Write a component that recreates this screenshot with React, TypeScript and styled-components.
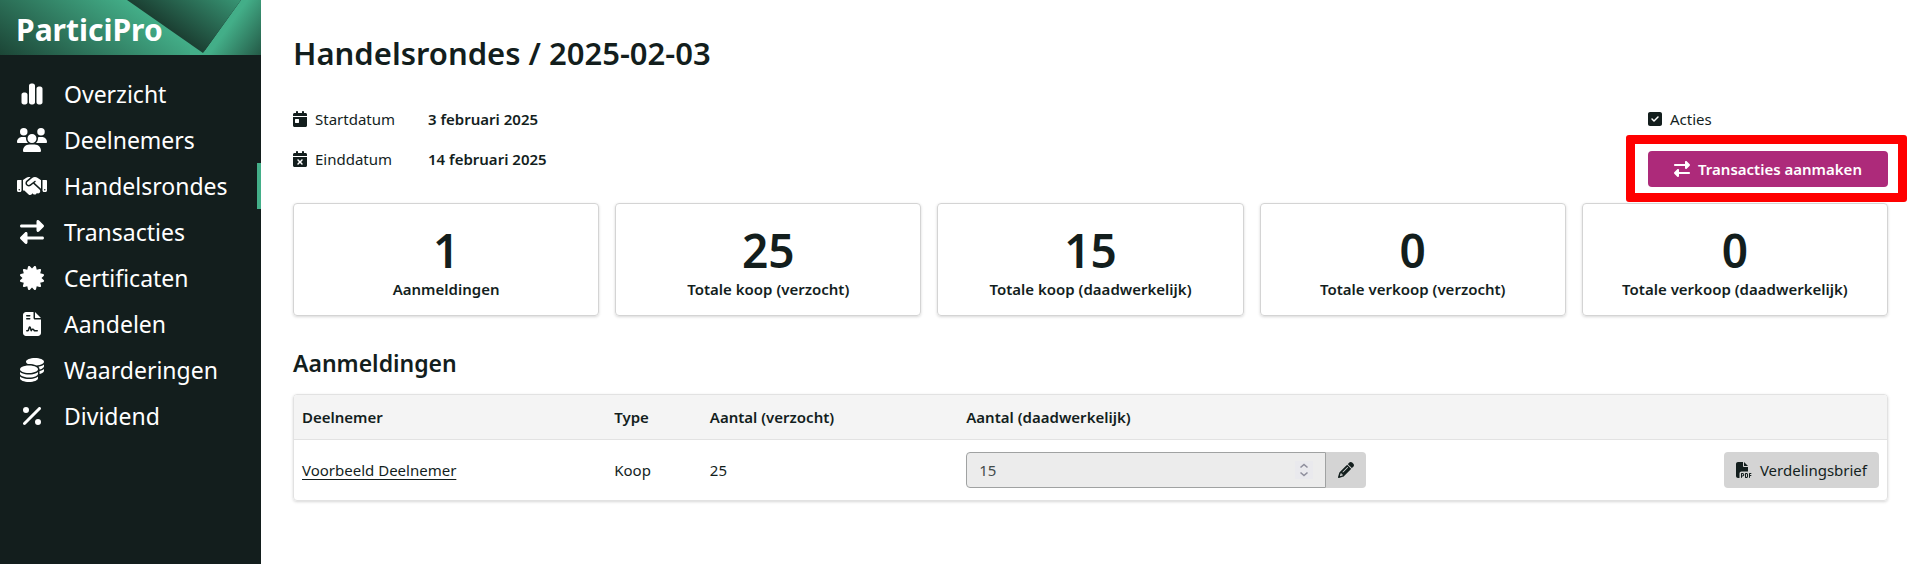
import React from "react";
import type { ReactNode } from "react";
import styled, { createGlobalStyle, css } from "styled-components";
import {
  FaCalendarDay,
  FaCalendarXmark,
  FaCertificate,
  FaChartSimple,
  FaCoins,
  FaFileContract,
  FaFilePdf,
  FaHandshake,
  FaPencil,
  FaPercent,
  FaRightLeft,
  FaSquareCheck,
  FaUsers,
} from "react-icons/fa6";

const ink = "#131e1d";
const green = "#43ae88";
const grey = "#d4d4d4";
const fontStack = '"Noto Sans", "Open Sans", sans-serif';

const GlobalStyle = createGlobalStyle`
  *, *::before, *::after { box-sizing: border-box; }
  body {
    margin: 0;
    background: #fff;
    color: ${ink};
    font: 400 15px/24px ${fontStack};
  }
  button, input { font: inherit; color: inherit; }
`;

const Shell = styled.div`
  display: flex;
  min-height: 100vh;
`;

const Sidebar = styled.aside`
  flex: 0 0 261px;
  background: ${ink};
  color: #fff;
`;

const Brand = styled.div`
  position: relative;
  height: 55px;
  padding: 0 16px;
  overflow: hidden;
  font-size: 30px;
  font-weight: 700;
  line-height: 59px;
`;

const BrandArt = styled.svg`
  position: absolute;
  inset: 0;
  width: 100%;
  height: 100%;
`;

const BrandName = styled.span`
  position: relative;
`;

const NavList = styled.ul`
  margin: 0;
  padding: 16px 0;
  list-style: none;
`;

const NavLink = styled.a<{ $active?: boolean }>`
  display: flex;
  align-items: center;
  gap: 16px;
  height: 46px;
  padding-left: 16px;
  color: #fff;
  font-size: 23px;
  text-decoration: none;
  ${(p) =>
    p.$active &&
    css`
      border-right: 4px solid ${green};
    `}
`;

const NavIcon = styled.span`
  display: flex;
  justify-content: center;
  width: 32px;

  svg {
    width: 30px;
    height: 24px;
  }
`;

const Main = styled.main`
  flex: 1;
  min-width: 0;
  padding: 32px 31px 32px 32px;
`;

const Title = styled.h1`
  margin: 0 0 33px;
  font-size: 31px;
  font-weight: 600;
  line-height: 42px;
`;

const Summary = styled.div`
  display: flex;
  justify-content: space-between;
  align-items: flex-start;
  margin-bottom: 16px;
`;

const Dates = styled.dl`
  display: grid;
  grid-template-columns: 135px auto;
  row-gap: 16px;
  margin: 0;
`;

const Term = styled.dt`
  display: flex;
  align-items: center;
  gap: 8px;

  svg {
    width: 14px;
    height: 16px;
  }
`;

const Value = styled.dd`
  margin: 0;
  font-weight: 600;
`;

const Actions = styled.div`
  width: 240px;
`;

const ActionsLabel = styled.div`
  display: flex;
  align-items: center;
  gap: 8px;
  margin-bottom: 20px;

  svg {
    width: 14px;
    height: 16px;
  }
`;

const Highlight = styled.div`
  position: relative;

  &::after {
    content: "";
    position: absolute;
    inset: -16px -19px -15px -22px;
    border: 9px solid #f00;
    border-radius: 3px;
    pointer-events: none;
  }
`;

const Button = styled.button<{ $primary?: boolean }>`
  display: inline-flex;
  align-items: center;
  justify-content: center;
  gap: 8px;
  height: 36px;
  padding: 0 12px;
  border: 0;
  border-radius: 4px;
  background: ${grey};
  cursor: pointer;

  svg {
    width: 16px;
    height: 16px;
  }

  ${(p) =>
    p.$primary &&
    css`
      width: 100%;
      background: #ad2a7a;
      color: #fff;
      font-weight: 600;
    `}
`;

const Stats = styled.div`
  display: grid;
  grid-template-columns: repeat(5, 1fr);
  gap: 16px;
`;

const StatCard = styled.div`
  padding: 20px 16px 14px;
  border: 1px solid ${grey};
  border-radius: 4px;
  box-shadow: 0 1px 3px rgba(0, 0, 0, 0.16);
  text-align: center;
  font-weight: 600;
`;

const StatValue = styled.div`
  font-size: 46px;
  line-height: 53px;
`;

const SectionTitle = styled.h2`
  margin: 31px 0 15px;
  font-size: 23px;
  font-weight: 600;
  line-height: 32px;
`;

const TableFrame = styled.div`
  border: 1px solid #e2e2e2;
  border-radius: 4px;
  box-shadow: 0 1px 3px rgba(0, 0, 0, 0.16);
  overflow: hidden;
`;

const Table = styled.table`
  width: 100%;
  border-collapse: separate;
  border-spacing: 0;
  table-layout: fixed;
`;

const HeadCell = styled.th<{ $width?: string }>`
  width: ${(p) => p.$width ?? "auto"};
  height: 45px;
  padding: 0 8px;
  border-bottom: 1px solid #e2e2e2;
  background: #f4f4f4;
  font-weight: 600;
  text-align: left;
`;

const Cell = styled.td<{ $end?: boolean }>`
  height: 60px;
  padding: 0 8px;
  text-align: ${(p) => (p.$end ? "right" : "left")};
`;

const ParticipantLink = styled.a`
  color: inherit;
  text-underline-offset: 3px;
`;

const AmountGroup = styled.div`
  display: flex;
  width: 400px;
`;

const AmountField = styled.div`
  display: flex;
  align-items: center;
  width: 360px;
  height: 36px;
  padding: 0 12px 0 12px;
  border: 1px solid #a0a2a2;
  border-radius: 4px 0 0 4px;
  background: #ececec;
  color: #424b4a;
`;

const AmountInput = styled.input`
  flex: 1;
  min-width: 0;
  padding: 0;
  border: 0;
  background: transparent;
  appearance: textfield;

  &::-webkit-inner-spin-button {
    display: none;
  }
`;

const Spinner = styled.svg`
  width: 18px;
  height: 18px;
  background: #e9e9ed;
`;

const EditButton = styled(Button)`
  width: 40px;
  padding: 0;
  border-radius: 0 4px 4px 0;
`;

const navItems: { label: string; icon: ReactNode; active?: boolean }[] = [
  { label: "Overzicht", icon: <FaChartSimple /> },
  { label: "Deelnemers", icon: <FaUsers /> },
  { label: "Handelsrondes", icon: <FaHandshake />, active: true },
  { label: "Transacties", icon: <FaRightLeft /> },
  { label: "Certificaten", icon: <FaCertificate /> },
  { label: "Aandelen", icon: <FaFileContract /> },
  { label: "Waarderingen", icon: <FaCoins /> },
  { label: "Dividend", icon: <FaPercent /> },
];

const stats = [
  { value: 1, label: "Aanmeldingen" },
  { value: 25, label: "Totale koop (verzocht)" },
  { value: 15, label: "Totale koop (daadwerkelijk)" },
  { value: 0, label: "Totale verkoop (verzocht)" },
  { value: 0, label: "Totale verkoop (daadwerkelijk)" },
];

function BrandBackground() {
  return (
    <BrandArt viewBox="0 0 261 55" preserveAspectRatio="none" aria-hidden="true">
      <defs>
        <linearGradient id="left" gradientUnits="userSpaceOnUse" x1="0" y1="55" x2="67" y2="-42">
          <stop offset="0" stopColor="#1c4536" />
          <stop offset="1" stopColor={green} />
        </linearGradient>
        <linearGradient id="fold" gradientUnits="userSpaceOnUse" x1="203" y1="53" x2="246" y2="-8">
          <stop offset="0" stopColor="#1b3f32" />
          <stop offset="1" stopColor="#3ca27e" />
        </linearGradient>
        <linearGradient id="right" gradientUnits="userSpaceOnUse" x1="203" y1="53" x2="248" y2="85">
          <stop offset="0.1" stopColor={green} />
          <stop offset="1" stopColor="#1f4c3c" />
        </linearGradient>
      </defs>
      <path d="M0 0H200V55H0Z" fill="url(#left)" />
      <path d="M241 0H261V55H202L203 53Z" fill="url(#right)" />
      <path d="M190 40H206L204 55H190Z" fill={green} />
      <path d="M127 0H241L203 53Z" fill="url(#fold)" />
    </BrandArt>
  );
}

export default function App() {
  return (
    <>
      <GlobalStyle />
      <Shell>
        <Sidebar>
          <Brand>
            <BrandBackground />
            <BrandName>ParticiPro</BrandName>
          </Brand>
          <nav>
            <NavList>
              {navItems.map((item) => (
                <li key={item.label}>
                  <NavLink href="#" $active={item.active}>
                    <NavIcon>{item.icon}</NavIcon>
                    {item.label}
                  </NavLink>
                </li>
              ))}
            </NavList>
          </nav>
        </Sidebar>
        <Main>
          <Title>Handelsrondes / 2025-02-03</Title>
          <Summary>
            <Dates>
              <Term>
                <FaCalendarDay />
                Startdatum
              </Term>
              <Value>3 februari 2025</Value>
              <Term>
                <FaCalendarXmark />
                Einddatum
              </Term>
              <Value>14 februari 2025</Value>
            </Dates>
            <Actions>
              <ActionsLabel>
                <FaSquareCheck />
                Acties
              </ActionsLabel>
              <Highlight>
                <Button type="button" $primary>
                  <FaRightLeft />
                  Transacties aanmaken
                </Button>
              </Highlight>
            </Actions>
          </Summary>
          <Stats>
            {stats.map((stat) => (
              <StatCard key={stat.label}>
                <StatValue>{stat.value}</StatValue>
                {stat.label}
              </StatCard>
            ))}
          </Stats>
          <SectionTitle>Aanmeldingen</SectionTitle>
          <TableFrame>
            <Table>
              <thead>
                <tr>
                  <HeadCell $width="19.6%">Deelnemer</HeadCell>
                  <HeadCell $width="6%">Type</HeadCell>
                  <HeadCell $width="16.1%">Aantal (verzocht)</HeadCell>
                  <HeadCell id="actual">Aantal (daadwerkelijk)</HeadCell>
                  <HeadCell />
                </tr>
              </thead>
              <tbody>
                <tr>
                  <Cell>
                    <ParticipantLink href="#">Voorbeeld Deelnemer</ParticipantLink>
                  </Cell>
                  <Cell>Koop</Cell>
                  <Cell>25</Cell>
                  <Cell>
                    <AmountGroup>
                      <AmountField>
                        <AmountInput type="number" defaultValue={15} readOnly aria-labelledby="actual" />
                        <Spinner viewBox="0 0 18 18" fill="none" stroke="#8f8f9d" strokeWidth="1.6" aria-hidden="true">
                          <path d="M5.5 6.5L9 3.5l3.5 3M5.5 11.5L9 14.5l3.5-3" />
                        </Spinner>
                      </AmountField>
                      <EditButton type="button" aria-label="Bewerken">
                        <FaPencil />
                      </EditButton>
                    </AmountGroup>
                  </Cell>
                  <Cell $end>
                    <Button type="button">
                      <FaFilePdf />
                      Verdelingsbrief
                    </Button>
                  </Cell>
                </tr>
              </tbody>
            </Table>
          </TableFrame>
        </Main>
      </Shell>
    </>
  );
}
